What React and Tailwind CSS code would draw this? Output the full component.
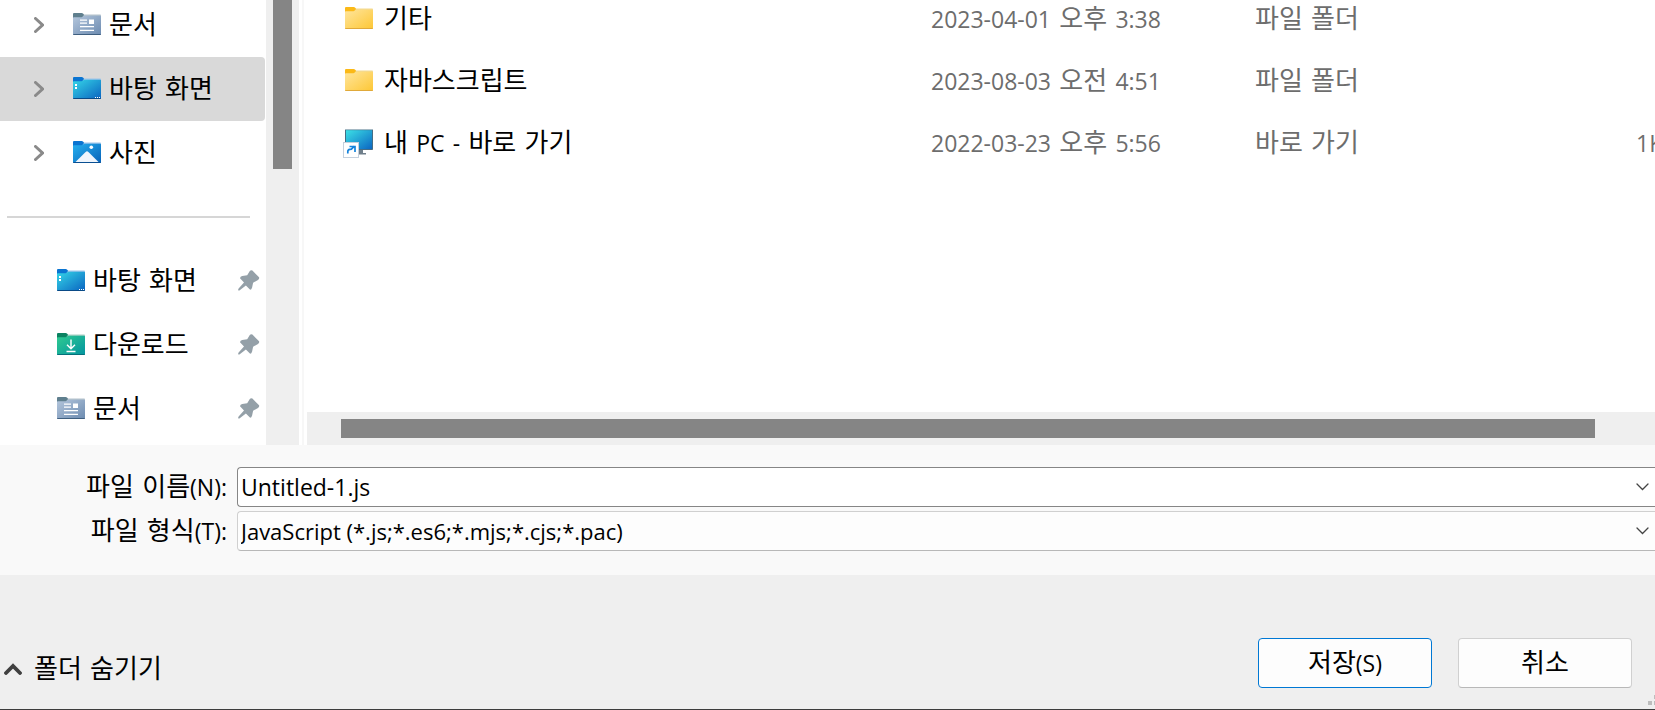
import React, { useState } from "react";
import { clsx } from "clsx";

const quickAccess = [
  { name: "바탕 화면", icon: "desktop" },
  { name: "다운로드", icon: "downloads" },
  { name: "문서", icon: "documents" },
];

const treeItems = [
  { name: "문서", icon: "documents" },
  { name: "바탕 화면", icon: "desktop" },
  { name: "사진", icon: "pictures" },
];

const files = [
  { name: "기타", date: "2023-04-01 오후 3:38", type: "파일 폴더", size: "", icon: "folder" },
  { name: "자바스크립트", date: "2023-08-03 오전 4:51", type: "파일 폴더", size: "", icon: "folder" },
  { name: "내 PC - 바로 가기", date: "2022-03-23 오후 5:56", type: "바로 가기", size: "1KB", icon: "shortcut" },
];

const folderColors = {
  folder: { tab: "#fbb917", from: "#ffe59c", to: "#fdc735", edge: "#e0a93a", back: "#f3d98f" },
  desktop: { tab: "#0a74d1", from: "#35d6e8", to: "#0a63c0", edge: "#0a4a86", back: "#9cc4ea" },
  downloads: { tab: "#0b8261", from: "#2fcb90", to: "#0394a0", edge: "#05707a", back: "#a5cfc4" },
  documents: { tab: "#5f7f8e", from: "#b4c6dc", to: "#6c8bb0", edge: "#3f5f80", back: "#b3c2cc" },
  pictures: { tab: "#0a74d1", from: "#25b0f0", to: "#0761b8", edge: "#0a4f92", back: "#9cc4ea" },
};

function FolderIcon({ kind }) {
  const c = folderColors[kind];
  const id = `fill-${kind}`;
  return (
    <svg className="mb-0.5 shrink-0" width="28" height="22" viewBox="0 0 28 22" aria-hidden="true">
      <defs>
        <linearGradient id={id} x1="0" y1="0" x2="1" y2="1">
          <stop offset="0" stopColor={c.from} />
          <stop offset="1" stopColor={c.to} />
        </linearGradient>
      </defs>
      <path d="M10 1.5h17.2q.8 0 .8.8V5H8z" fill={c.back} />
      <path d="M0 1Q0 0 1 0h7.6q.8 0 1.4.6l1 1.2L9 5H0z" fill={c.tab} />
      <path d="M0 5q0-.8.8-.8h7.6q.8 0 1.4-.6l.6-.4q.5-.4 1.2-.4h15.6q.8 0 .8.8V21q0 1-1 1H1q-1 0-1-1z" fill={`url(#${id})`} />
      <path d="M0 21h28q0 1-1 1H1q-1 0-1-1z" fill={c.edge} />
      {kind === "desktop" && (
        <path d="M2 7h2v2H2zM2 10h2v2H2zM22 20h1v1h-1zM24 20h1v1h-1zM26 20h1v1h-1z" fill="#fff" />
      )}
      {kind === "downloads" && (
        <path d="M14 6.500v9M10 11.800l4 4 4-4M9.500 18.500h9" fill="none" stroke="#fff" strokeWidth="1.4" />
      )}
      {kind === "documents" && (
        <path d="M7 6.500h7v1.200H7zM7 9.500h7v1.200H7zM16 6.500h5v4.500h-5zM7 13h14v1.200H7zM7 16.800h14v1.200H7z" fill="#fff" />
      )}
      {kind === "pictures" && (
        <>
          <path d="M2.500 21 12.600 11q1.400-1.300 2.800 0L25.500 21z" fill="#eef5fd" />
          <circle cx="18.3" cy="6.2" r="1.8" fill="#fff" />
        </>
      )}
    </svg>
  );
}

function ShortcutIcon() {
  return (
    <svg className="-ml-0.5 shrink-0" width="30" height="29" viewBox="0 0 30 29" aria-hidden="true">
      <defs>
        <linearGradient id="screen" x1="0" y1="0" x2="1" y2="1">
          <stop offset="0" stopColor="#3be0e6" />
          <stop offset="1" stopColor="#0b66c2" />
        </linearGradient>
      </defs>
      <path d="M14 21h6v3h3v1.500H12z" fill="#6f7f8b" />
      <rect x="2" y="0" width="28" height="21" rx=".8" fill="#456d84" />
      <path d="M2 .5h28" stroke="#a5b9c4" />
      <rect x="3" y="1.2" width="26" height="18.8" fill="url(#screen)" />
      <rect x=".5" y="13.5" width="15" height="15" fill="#fff" stroke="#c5d0dc" />
      <path d="M4.800 24.500v-2q0-2 2-2.200l1.600-.1 3-3M6.500 17.500h5.500v5.500" fill="none" stroke="#1583dc" strokeWidth="1.7" />
    </svg>
  );
}

function PinIcon() {
  return (
    <svg className="shrink-0" width="22" height="22" viewBox="0 0 22 22" aria-hidden="true">
      <path
        d="M14.400.6q-1.500-1-2.600.5L9.200 5.200 4.200 6q-2 .6-2.200 2.200l4 4.200-5.400 6.200q-1.200 2.200.8 2l6.500-5 4 4q1.500.3 2.200-2.200l1-4.600 4.900-2.900q2-1.500.800-3z"
        fill="#94a0a8"
      />
    </svg>
  );
}

function Chevron({ d, width, height, stroke, strokeWidth }) {
  return (
    <svg className="shrink-0" width={width} height={height} viewBox={`0 0 ${width} ${height}`} aria-hidden="true">
      <path d={d} fill="none" stroke={stroke} strokeWidth={strokeWidth} strokeLinecap="round" />
    </svg>
  );
}

const DropArrow = () => (
  <Chevron d="M1 1l5.500 5.500L12 1" width={13} height={8} stroke="#444" strokeWidth={1.3} />
);

// Hangul is set larger than the Latin letters and digits next to it.
function Text({ children }) {
  return (
    <span className="block font-['DejaVu_Sans','Noto_Sans_CJK_KR',sans-serif] text-[26px] whitespace-pre">
      {children.split(/([!-~]+)/).map((part, i) =>
        i % 2 ? <span key={i} className="font-['Open_Sans',sans-serif] text-[23px]">{part}</span> : part
      )}
    </span>
  );
}

function Sidebar() {
  const [selected, setSelected] = useState("바탕 화면");

  return (
    <nav className="w-[266px] shrink-0 overflow-hidden">
      <div className="-mt-[7px]">
        {treeItems.map(item => (
          <button
            key={item.name}
            onClick={() => setSelected(item.name)}
            className={clsx(
              "flex h-16 w-[265px] items-center rounded-r-sm pl-[34px]",
              selected === item.name && "bg-[#d9d9d9]"
            )}
          >
            <Chevron d="M1.500 1.500 8.500 8l-7 6.500" width={10} height={16} stroke="#8a8a8a" strokeWidth={3} />
            <span className="mr-2 ml-[29px] flex"><FolderIcon kind={item.icon} /></span>
            <Text>{item.name}</Text>
          </button>
        ))}
      </div>
      <hr className="mt-[31px] mr-4 mb-[31px] ml-[7px] border-t-2 border-[#d6d6d6]" />
      {quickAccess.map(item => (
        <button key={item.name} className="flex h-16 w-full items-center pr-[6px] pl-[57px]">
          <FolderIcon kind={item.icon} />
          <span className="ml-2 flex-1 text-left"><Text>{item.name}</Text></span>
          <PinIcon />
        </button>
      ))}
    </nav>
  );
}

function FileList() {
  return (
    <div className="flex-1 overflow-hidden">
      <table className="-mt-3 w-full table-fixed">
        <colgroup>
          <col className="w-[624px]" />
          <col className="w-[324px]" />
          <col className="w-[381px]" />
          <col />
        </colgroup>
        <tbody>
          {files.map(file => (
            <tr key={file.name} className="h-[62px] text-[#6d6d6d]">
              <td className="p-0 text-black">
                <div className="flex items-center pl-[38px]">
                  {file.icon === "shortcut" ? <ShortcutIcon /> : <FolderIcon kind={file.icon} />}
                  <span className="ml-[11px]"><Text>{file.name}</Text></span>
                </div>
              </td>
              <td className="p-0"><Text>{file.date}</Text></td>
              <td className="p-0"><Text>{file.type}</Text></td>
              <td className="p-0"><Text>{file.size}</Text></td>
            </tr>
          ))}
        </tbody>
      </table>
    </div>
  );
}

export default function App() {
  const [fileName, setFileName] = useState("Untitled-1.js");

  return (
    <div className="flex h-screen flex-col overflow-hidden border-b border-[#3c3c3c] bg-white font-['Open_Sans','Noto_Sans_CJK_KR',sans-serif] leading-10 text-black">
      <div className="flex min-h-0 flex-1">
        <Sidebar />

        {/* Vertical scrollbar */}
        <div className="w-[33px] shrink-0 bg-[#efefef] px-[7px]">
          <div className="h-[169px] bg-[#858585]" />
        </div>
        <div className="mx-[3px] w-0.5 shrink-0 bg-[#f7f7f7]" />

        <main className="flex min-w-0 flex-1 flex-col">
          <FileList />
          {/* Horizontal scrollbar */}
          <div className="h-[33px] bg-[#efefef] py-[7px] pr-[60px] pl-[34px]">
            <div className="h-full bg-[#858585]" />
          </div>
        </main>
      </div>

      {/* File name and type */}
      <form className="grid grid-cols-[227px_1fr] items-center gap-x-[10px] gap-y-1 bg-[#f9f9f9] pt-[22px] pb-6">
        <label htmlFor="file-name" className="h-10 text-right"><Text>파일 이름(N):</Text></label>
        <div className="flex h-10 items-center rounded-l-sm border border-r-0 border-[#868686] bg-white pr-[6px]">
          <input
            id="file-name"
            className="h-full min-w-0 flex-1 pl-[3px] text-[23px] outline-none"
            value={fileName}
            onChange={e => setFileName(e.target.value)}
          />
          <button type="button" aria-label="이전 파일 이름"><DropArrow /></button>
        </div>
        <label htmlFor="file-type" className="h-10 text-right"><Text>파일 형식(T):</Text></label>
        <div className="relative flex h-10 items-center rounded-l-sm border border-r-0 border-[#d0d0d0] border-b-[#b8b8b8] bg-[#fdfdfd]">
          <select id="file-type" className="min-w-0 flex-1 appearance-none pl-[3px] text-[22px] outline-none">
            <option>JavaScript (*.js;*.es6;*.mjs;*.cjs;*.pac)</option>
          </select>
          <span className="pointer-events-none absolute right-[6px]"><DropArrow /></span>
        </div>
      </form>

      {/* Footer */}
      <footer className="relative flex h-[134px] items-center gap-[26px] bg-[#efefef] pt-[42px] pr-[23px] pl-1">
        <button className="mr-auto flex items-center gap-3 pt-3">
          <Chevron d="M2 10l7-7 7 7" width={18} height={12} stroke="#404040" strokeWidth={3.8} />
          <Text>폴더 숨기기</Text>
        </button>
        <button className="flex h-[50px] w-[174px] items-center justify-center rounded border border-[#0078d4] bg-[#fdfdfd]">
          <Text>저장(S)</Text>
        </button>
        <button className="flex h-[50px] w-[174px] items-center justify-center rounded border border-[#d0d0d0] border-b-[#b8b8b8] bg-[#fdfdfd]">
          <Text>취소</Text>
        </button>
        <svg className="absolute right-0 bottom-1" width="7" height="10" viewBox="0 0 7 10" aria-hidden="true">
          <path d="M0 6h4v4H0zM6 6h1v4H6zM6 0h1v4H6z" fill="#bdbdbd" />
        </svg>
      </footer>
    </div>
  );
}
